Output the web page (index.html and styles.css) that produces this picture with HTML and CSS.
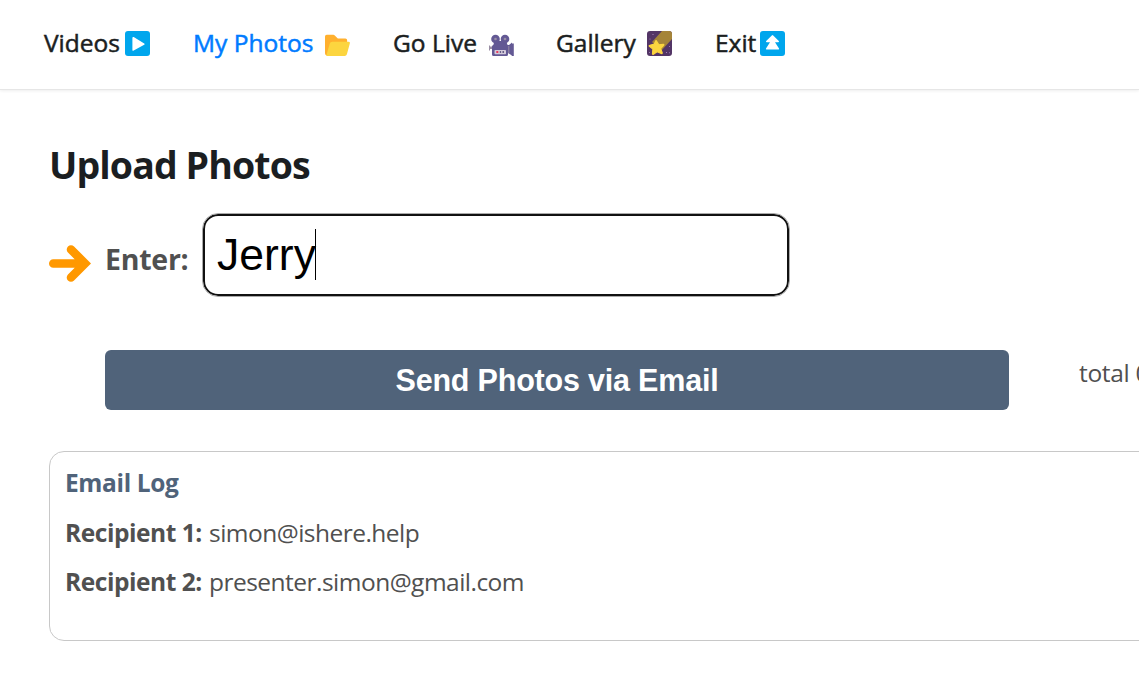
FILE: index.html
```html
<!DOCTYPE html>
<html lang="en">
<head>
<meta charset="utf-8">
<title>Upload Photos</title>
<link rel="stylesheet" href="styles.css">
</head>
<body>
<nav class="nav">
  <a class="nav-link videos"><span class="label">Videos</span><svg class="icon" viewBox="0 0 25 25"><rect width="25" height="25" rx="3" fill="#00a6ed"/><path d="M7.4 6.900c0-.9.6-1.200 1.300-.8l10.500 6.300c.6.400.6 1.100 0 1.400L8.700 19.600c-.7.400-1.300.1-1.300-.7Z" fill="#fff"/></svg></a>
  <a class="nav-link photos"><span class="label">My Photos</span><svg class="icon" viewBox="0 0 25 25"><path d="M0 5.500Q0 3.800 1.700 3.800H8.300Q9.100 3.800 9.800 4.400L12.300 6.900Q12.800 7.400 13.600 7.400H20.400Q22.100 7.400 22.100 9.100V18L3 24.800Q0 24.800 0 22Z" fill="#ffb02e"/><path d="M7.200 10.700H23.500Q25.300 10.700 24.800 12.400L21.900 23.200Q21.400 25 19.600 25H2.300Q1.100 25 1.500 23.700L4.800 12.500Q5.300 10.700 7.200 10.700Z" fill="#fcd53f"/></svg></a>
  <a class="nav-link live"><span class="label">Go Live</span><svg class="icon" viewBox="0 0 25 25"><path d="M0 15.500h3.500v2.500H0ZM0 14.500h1v5H0Z" fill="#998ea4"/><path d="M3 15.500Q3 14 4.500 14H20l3-2.500V24.500L19 22v1.500q0 1.500-1.500 1.500h-13Q3 25 3 23.500Z" fill="#635994"/><path d="M5.500 10h11.500l2 5H4Z" fill="#635994"/><path d="M22.800 12.500H24.800V25h-2Z" fill="#635994"/><path d="M19.300 15h1v7h-1Z" fill="#998ea4"/><circle cx="6.500" cy="8" r="4.300" fill="#635994"/><circle cx="16" cy="8" r="4.300" fill="#635994"/><circle cx="6.500" cy="8" r="1.300" fill="#998ea4"/><circle cx="16" cy="8" r="1.300" fill="#998ea4"/><rect x="5.500" y="19" width="11.500" height="4.200" rx=".8" fill="#d3cada"/><path d="M7.300 20h2v2h-2Z" fill="#e83b5c"/><path d="M10.800 20.200h1.300v1.500h-1.300ZM13.500 20.200h1.500v1.500h-1.500Z" fill="#433b6b"/></svg></a>
  <a class="nav-link gallery"><span class="label">Gallery</span><svg class="icon" viewBox="0 0 25 25"><rect width="25" height="25" rx="3" fill="#533566"/><path d="M15 0h7q3 0 3 3v5L14 20 5 11Z" fill="#a58439"/><path d="M9.500 10 11.800 13.800l4.500-.5q1 .2.300 1.100l-3 3.300 1.600 4.100q.1 1-.9.700l-4.200-1.800-3.700 2.500q-.9.400-.9-.6l.4-4.500-3.500-2.800q-.6-.8.400-1l4.400-1.100 1.500-3.300q.4-.6.800.1Z" fill="#fcd53f" stroke="#fcd53f" stroke-width="1.200" stroke-linejoin="round"/><g fill="#b58fc6"><circle cx="6" cy="3.500" r=".6"/><circle cx="3" cy="8" r=".5"/><circle cx="19.500" cy="21.500" r=".6"/><circle cx="22.500" cy="15.500" r=".5"/><circle cx="22.500" cy="21.800" r=".5"/><circle cx="2.500" cy="21.500" r=".5"/></g></svg></a>
  <a class="nav-link exit"><span class="label">Exit</span><svg class="icon" viewBox="0 0 25 25"><rect width="25" height="25" rx="3" fill="#00a6ed"/><path d="M11.800 4.400q.7-.7 1.400 0l5.600 5.700q.7 1-.5 1.100H15L19 17.500q.5 1-.6 1.100H6.600q-1.100-.1-.6-1.100L10 11.200H6.700q-1.200-.1-.5-1.100Z" fill="#fff"/></svg></a>
</nav>
<main class="page">
  <h1 class="title">Upload Photos</h1>
  <div class="entry">
    <svg class="arrow" viewBox="0 0 42 38"><path d="M4.300 18.500H32M22 4.500l14 14-14 14" fill="none" stroke="#ff9800" stroke-width="8.600" stroke-linecap="round" stroke-linejoin="miter"/></svg>
    <span class="enter">Enter:</span>
    <div class="field"><span class="value">Jerry</span><i class="caret"></i></div>
  </div>
  <div class="actions">
    <button class="send">Send Photos via Email</button>
    <span class="total">total 0</span>
  </div>
  <section class="log">
    <h2 class="log-title">Email Log</h2>
    <p class="row"><b class="key">Recipient 1:</b><span class="mail">simon@ishere.help</span></p>
    <p class="row"><b class="key">Recipient 2:</b><span class="mail">presenter.simon@gmail.com</span></p>
  </section>
</main>
</body>
</html>
```
FILE: styles.css
```css
* { box-sizing: border-box; }
body {
  margin: 0;
  width: 1139px;
  height: 676px;
  overflow: hidden;
  background: #fff;
  color: #505050;
  font-family: "Open Sans", "Noto Sans", sans-serif;
  font-size: 24.500px;
  white-space: nowrap;
}
.nav {
  display: flex;
  height: 90px;
  padding: 26px 0 0 44px;
  border-bottom: 1px solid #e6e6e6;
  box-shadow: 0 1px 3px rgba(0, 0, 0, .07);
  color: #1b1e21;
  -webkit-text-stroke: .5px currentColor;
}
.nav-link { display: flex; justify-content: space-between; height: 34px; line-height: 34px; }
.icon { width: 25px; height: 25px; margin-top: 5px; flex: none; }
.label { width: 0; }
.videos { width: 106px; margin-right: 43px; }
.photos { width: 157px; margin-right: 43px; color: #007bff; }
.live { width: 121px; margin-right: 42px; }
.gallery { width: 116px; margin-right: 43px; }
.exit { width: 70px; }
.page { padding: 49px 0 0 49px; }
.title { margin: 0; height: 52px; line-height: 52px; font-size: 37.500px; font-weight: 700; letter-spacing: -.9px; color: #1b1e21; }
.entry { display: flex; margin-top: 22px; height: 84px; }
.arrow { width: 42px; height: 38px; margin-top: 32px; }
.enter { width: 97px; padding-left: 14px; margin-right: 14px; line-height: 93px; font-size: 28.500px; font-weight: 700; letter-spacing: -.25px; }
.field {
  display: flex;
  width: 588px;
  height: 84px;
  padding: 14px 0 0 13px;
  border: 1px solid #aaa;
  border-radius: 16px;
  box-shadow: inset 0 0 0 2px #111;
  color: #000;
  font: 44.500px/54px "Liberation Sans", Arial, sans-serif;
}
.value { margin-left: 1px; }
.caret { width: 1px; height: 51px; margin: 1px 0 0 -1px; background: #000; }
.actions { display: flex; margin: 53px 0 0 56px; }
.send {
  flex: none;
  width: 904px;
  height: 60px;
  padding: 0;
  border: 0;
  border-radius: 6px;
  background: #50637a;
  color: #fff;
  font: bold 30.500px/60px "Liberation Sans", Arial, sans-serif;
  letter-spacing: -.2px;
}
.total { margin-left: 70px; line-height: 46px; letter-spacing: -.3px; }
.log {
  width: 1120px;
  height: 190px;
  margin-top: 41px;
  padding: 14px 15px 15px;
  border: 1px solid #c8c8c8;
  border-radius: 15px;
}
.log-title { margin: 0 0 16px; height: 34px; line-height: 34px; font-size: 24.500px; font-weight: 700; letter-spacing: -.35px; color: #50637a; }
.row { display: flex; margin: 0 0 15px; height: 34px; line-height: 34px; }
.key { width: 144px; letter-spacing: -.45px; }
.mail { letter-spacing: -.52px; }
```
